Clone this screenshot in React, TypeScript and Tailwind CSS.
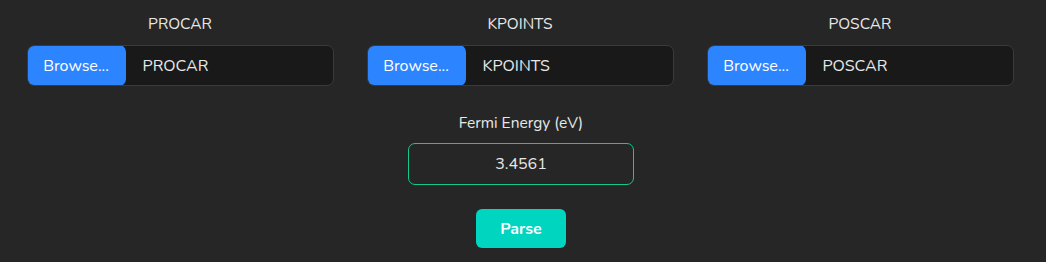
import React, { useState } from 'react';

const files = ['PROCAR', 'KPOINTS', 'POSCAR'];

function FileField({ name }: { name: string }) {
  return (
    <div className="flex flex-col items-center w-[340px]">
      <p className="text-[15.5px] text-[#e8e8e8] h-[20px] leading-[20px] mt-[14px]">{name}</p>
      <div className="mt-[11px] flex w-[307px] h-[41px] rounded-[7px] border border-[#3a3a3a] bg-[#191919] overflow-hidden">
        <button className="w-[99px] bg-[#2c84ff] text-white text-[16px] rounded-[7px] -ml-px -mt-px h-[41px]">
          Browse...
        </button>
        <span className="flex items-center pl-[17px] text-[16px] text-[#e8e8e8]">{name}</span>
      </div>
    </div>
  );
}

export default function App() {
  const [fermi, setFermi] = useState('3.4561');

  return (
    <div className="w-[1046px] h-[262px] bg-[#262626] font-['Nunito','Lato',sans-serif] overflow-hidden">
      {/* File inputs */}
      <div className="flex pl-[10px]">
        {files.map((f) => (
          <FileField key={f} name={f} />
        ))}
      </div>

      {/* Fermi energy */}
      <div className="flex flex-col items-center pr-[4px]">
        <p className="mt-[27px] text-[15.5px] text-[#e8e8e8] h-[20px] leading-[20px]">Fermi Energy (eV)</p>
        <input
          value={fermi}
          onChange={(e) => setFermi(e.target.value)}
          className="mt-[10px] w-[226px] h-[42px] rounded-[7px] border border-[#14c98f] bg-transparent text-center text-[16px] text-[#e8e8e8] outline-none"
        />
        <button className="mt-[24px] w-[90px] h-[39px] rounded-[6px] bg-[#00d5bf] text-white text-[16px] font-bold">
          Parse
        </button>
      </div>
    </div>
  );
}
